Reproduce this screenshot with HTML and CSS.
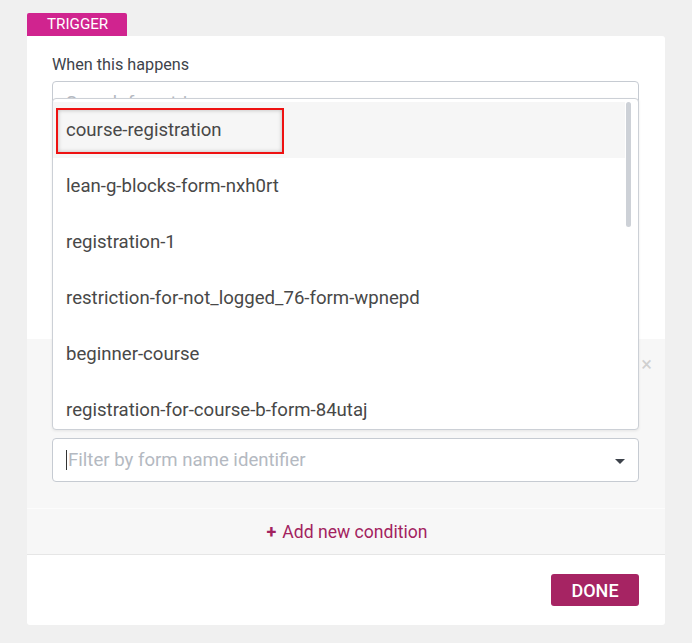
FILE: index.html
```html
<!DOCTYPE html>
<html>
<head>
<meta charset="utf-8">
<link rel="stylesheet" href="styles.css">
</head>
<body>
<div class="panel">
  <div class="tab">TRIGGER</div>
  <div class="card">
    <div class="top">
      <div class="label">When this happens</div>
      <div class="search-wrap">
        <div class="input search"><span class="placeholder">Search for a trigger</span></div>
        <div class="dropdown">
          <div class="list">
            <div class="item active">course-registration</div>
            <div class="item">lean-g-blocks-form-nxh0rt</div>
            <div class="item">registration-1</div>
            <div class="item">restriction-for-not_logged_76-form-wpnepd</div>
            <div class="item">beginner-course</div>
            <div class="item">registration-for-course-b-form-84utaj</div>
          </div>
          <div class="thumb"></div>
          <div class="mark"></div>
        </div>
      </div>
    </div>
    <div class="conditions">
      <span class="close">×</span>
      <div class="input filter">
        <span class="caret"></span><span class="placeholder">Filter by form name identifier</span>
        <span class="arrow"></span>
      </div>
    </div>
    <div class="add"><span class="plus">+</span> Add new condition</div>
    <div class="footer">
      <button class="done">DONE</button>
    </div>
  </div>
</div>
</body>
</html>
```
FILE: styles.css
```css
* { box-sizing: border-box; }
html, body { margin: 0; padding: 0; }
body {
  background: #f0f0f0;
  font-family: Roboto, "Noto Sans", sans-serif;
  width: 692px;
  height: 643px;
  overflow: hidden;
}
.panel {
  margin: 13px 0 0 27px;
  width: 638px;
}
.tab {
  width: 100px;
  height: 23px;
  background: #d0248f;
  color: #fff;
  font-size: 15.2px;
  line-height: 23px;
  padding-left: 20px;
  border-radius: 2px 2px 0 0;
}
.card {
  background: #fff;
  border-radius: 0 3px 3px 3px;
}
.top {
  height: 303px;
  padding: 20px 26px 0 25px;
}
.label {
  font-size: 16.2px;
  color: #3d434b;
  line-height: 18px;
  height: 25px;
}
.search-wrap {
  position: relative;
  z-index: 2;
}
.input {
  height: 44px;
  border: 1px solid #c6cbd2;
  border-radius: 4px;
  background: #fff;
  display: flex;
  align-items: center;
  padding-left: 13px;
  font-size: 18.6px;
  position: relative;
}
.placeholder { color: #b4b9c1; }
.dropdown {
  position: absolute;
  left: 0;
  right: 0;
  top: 17px;
  height: 332px;
  background: #fff;
  border: 1px solid #ccd0d6;
  border-radius: 4px;
  box-shadow: 0 1px 3px rgba(0,0,0,0.08);
  overflow: hidden;
  padding: 3px 0 0 0;
}
.list { margin-right: 13px; }
.item {
  height: 56px;
  line-height: 56px;
  padding-left: 13px;
  font-size: 18.6px;
  color: #484848;
  white-space: nowrap;
}
.item.active { background: #f6f6f6; }
.thumb {
  position: absolute;
  right: 7px;
  top: 3px;
  width: 5px;
  height: 125px;
  background: #cdd1d7;
  border-radius: 3px;
}
.mark {
  position: absolute;
  left: 3px;
  top: 9px;
  width: 228px;
  height: 46px;
  border: 2px solid #e11;
  box-shadow: inset 0 0 4px rgba(0,0,0,0.25);
}
.conditions {
  background: #f7f7f7;
  height: 169px;
  padding: 99px 26px 0 25px;
  position: relative;
}
.close {
  position: absolute;
  right: 13px;
  top: 15px;
  font-size: 20px;
  color: #d0d0d0;
  line-height: 20px;
}
.filter .caret {
  display: inline-block;
  width: 1px;
  height: 20px;
  background: #333;
  margin-right: 1px;
}
.arrow {
  position: absolute;
  right: 13px;
  top: 20px;
  width: 0;
  height: 0;
  border-left: 5px solid transparent;
  border-right: 5px solid transparent;
  border-top: 5px solid #3d434b;
}
.add {
  border-top: 1px solid #fcfcfc;
  border-bottom: 1px solid #e6e6e6;
  background: #f7f7f7;
  height: 47px;
  display: flex;
  align-items: center;
  justify-content: center;
  font-size: 17.6px;
  color: #a3235f;
  gap: 6px;
  padding-left: 2px;
}
.plus { font-weight: 700; font-size: 18px; }
.footer {
  height: 70px;
  display: flex;
  justify-content: flex-end;
  align-items: flex-start;
  padding: 19px 26px 0 0;
}
.done {
  background: #a62463;
  color: #fff;
  border: none;
  border-radius: 3px;
  width: 88px;
  height: 32px;
  font-family: Roboto, sans-serif;
  font-size: 18px;
  font-weight: 500;
  padding: 0;
}
```
